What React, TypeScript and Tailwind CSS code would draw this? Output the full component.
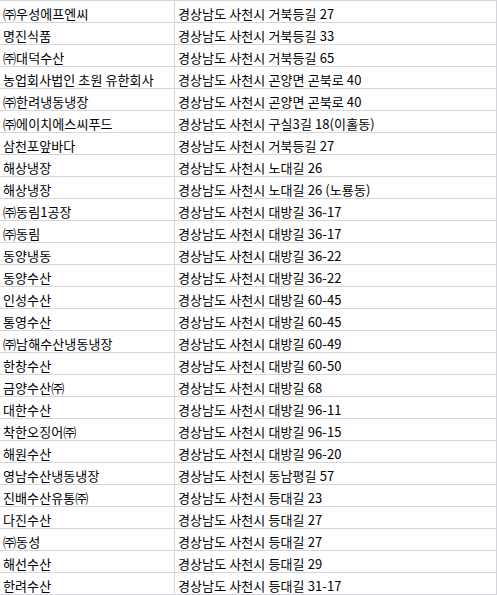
const rows: [string, string][] = [
  ['㈜우성에프엔씨', '경상남도 사천시 거북등길 27'],
  ['명진식품', '경상남도 사천시 거북등길 33'],
  ['㈜대덕수산', '경상남도 사천시 거북등길 65'],
  ['농업회사법인 초원 유한회사', '경상남도 사천시 곤양면 곤북로 40'],
  ['㈜한려냉동냉장', '경상남도 사천시 곤양면 곤북로 40'],
  ['㈜에이치에스씨푸드', '경상남도 사천시 구실3길 18(이홀동)'],
  ['삼천포앞바다', '경상남도 사천시 거북등길 27'],
  ['해상냉장', '경상남도 사천시 노대길 26'],
  ['해상냉장', '경상남도 사천시 노대길 26 (노룡동)'],
  ['㈜동림1공장', '경상남도 사천시 대방길 36-17'],
  ['㈜동림', '경상남도 사천시 대방길 36-17'],
  ['동양냉동', '경상남도 사천시 대방길 36-22'],
  ['동양수산', '경상남도 사천시 대방길 36-22'],
  ['인성수산', '경상남도 사천시 대방길 60-45'],
  ['통영수산', '경상남도 사천시 대방길 60-45'],
  ['㈜남해수산냉동냉장', '경상남도 사천시 대방길 60-49'],
  ['한창수산', '경상남도 사천시 대방길 60-50'],
  ['금양수산㈜', '경상남도 사천시 대방길 68'],
  ['대한수산', '경상남도 사천시 대방길 96-11'],
  ['착한오징어㈜', '경상남도 사천시 대방길 96-15'],
  ['해원수산', '경상남도 사천시 대방길 96-20'],
  ['영남수산냉동냉장', '경상남도 사천시 동남평길 57'],
  ['진배수산유통㈜', '경상남도 사천시 등대길 23'],
  ['다진수산', '경상남도 사천시 등대길 27'],
  ['㈜동성', '경상남도 사천시 등대길 27'],
  ['해선수산', '경상남도 사천시 등대길 29'],
  ['한려수산', '경상남도 사천시 등대길 31-17']
]

export default function App() {
  return (
    <div
      className="w-[497px] bg-white text-[13px] leading-[17px] tracking-[0.1px] text-black"
      style={{ fontFamily: '"Noto Sans CJK KR", "Noto Sans", sans-serif' }}
    >
      <div className="border-t border-[#d4d6db]">
        {rows.map(([name, address], i) => (
          <div key={i} className="flex h-[22px] border-b border-[#d4d6db]">
            <div className="flex w-[175px] items-end border-r border-[#d4d6db] pl-[3px] whitespace-nowrap">
              {name}
            </div>
            <div className="flex flex-1 items-end border-r border-[#d4d6db] pl-[3px] whitespace-nowrap">
              {address}
            </div>
          </div>
        ))}
      </div>
    </div>
  )
}
